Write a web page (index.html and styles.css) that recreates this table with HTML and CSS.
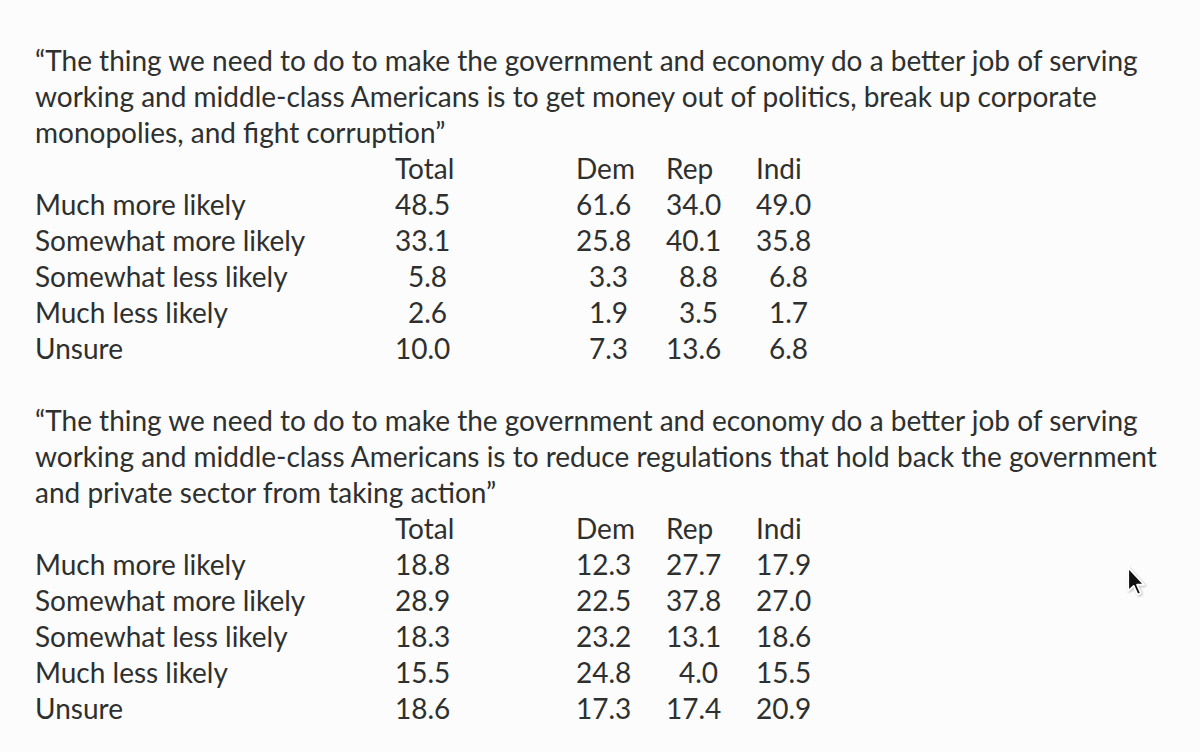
FILE: index.html
```html
<!DOCTYPE html>
<html lang="en">
<head>
<meta charset="utf-8">
<title>Poll results</title>
<link rel="stylesheet" href="styles.css">
</head>
<body>
<main class="slide">
  <section class="block">
    <p class="quote">“The thing we need to do to make the government and economy do a better job of serving<br>working and middle-class Americans is to get money out of politics, break up corporate<br>monopolies, and fight corruption”</p>
    <div class="table">
      <span></span><span class="h">Total</span><span class="h">Dem</span><span class="h">Rep</span><span class="h">Indi</span>
      <span class="l">Much more likely</span><span class="n">48.5</span><span class="n">61.6</span><span class="n">34.0</span><span class="n">49.0</span>
      <span class="l">Somewhat more likely</span><span class="n">33.1</span><span class="n">25.8</span><span class="n">40.1</span><span class="n">35.8</span>
      <span class="l">Somewhat less likely</span><span class="n">5.8</span><span class="n">3.3</span><span class="n">8.8</span><span class="n">6.8</span>
      <span class="l">Much less likely</span><span class="n">2.6</span><span class="n">1.9</span><span class="n">3.5</span><span class="n">1.7</span>
      <span class="l">Unsure</span><span class="n">10.0</span><span class="n">7.3</span><span class="n">13.6</span><span class="n">6.8</span>
    </div>
  </section>
  <section class="block">
    <p class="quote">“The thing we need to do to make the government and economy do a better job of serving<br>working and middle-class Americans is to reduce regulations that hold back the government<br>and private sector from taking action”</p>
    <div class="table">
      <span></span><span class="h">Total</span><span class="h">Dem</span><span class="h">Rep</span><span class="h">Indi</span>
      <span class="l">Much more likely</span><span class="n">18.8</span><span class="n">12.3</span><span class="n">27.7</span><span class="n">17.9</span>
      <span class="l">Somewhat more likely</span><span class="n">28.9</span><span class="n">22.5</span><span class="n">37.8</span><span class="n">27.0</span>
      <span class="l">Somewhat less likely</span><span class="n">18.3</span><span class="n">23.2</span><span class="n">13.1</span><span class="n">18.6</span>
      <span class="l">Much less likely</span><span class="n">15.5</span><span class="n">24.8</span><span class="n">4.0</span><span class="n">15.5</span>
      <span class="l">Unsure</span><span class="n">18.6</span><span class="n">17.3</span><span class="n">17.4</span><span class="n">20.9</span>
    </div>
  </section>
</main>
<svg class="cursor" width="22" height="34" viewBox="0 0 20 30" aria-hidden="true">
  <path d="M2 2 L2 23 L7 18.5 L10.5 26.5 L13.5 25.2 L10 17.5 L16.5 17.5 Z" fill="#111" stroke="#fff" stroke-width="1.6" stroke-linejoin="round"/>
</svg>
</body>
</html>
```
FILE: styles.css
```css
html, body {
  margin: 0;
  padding: 0;
  background: #fbfcfb;
}

body {
  width: 1200px;
  height: 752px;
  overflow: hidden;
  position: relative;
  font-family: Lato, "Open Sans", "Liberation Sans", sans-serif;
  font-size: 28px;
  line-height: 36px;
  color: #2e302f;
}

.slide {
  padding: 42px 0 0 35px;
  display: flex;
  flex-direction: column;
  gap: 36px;
}

.quote {
  margin: 0;
  white-space: nowrap;
}

.table {
  display: grid;
  grid-template-columns: 360px 52px 181px 90px 90px;
}

.table span {
  white-space: nowrap;
}

.n {
  justify-self: end;
  width: 52px;
  text-align: right;
}

.h {
  justify-self: end;
  width: 52px;
  text-align: left;
}

.cursor {
  position: absolute;
  left: 1126px;
  top: 565px;
  filter: drop-shadow(1px 1px 1px rgba(0,0,0,0.25));
}
```
